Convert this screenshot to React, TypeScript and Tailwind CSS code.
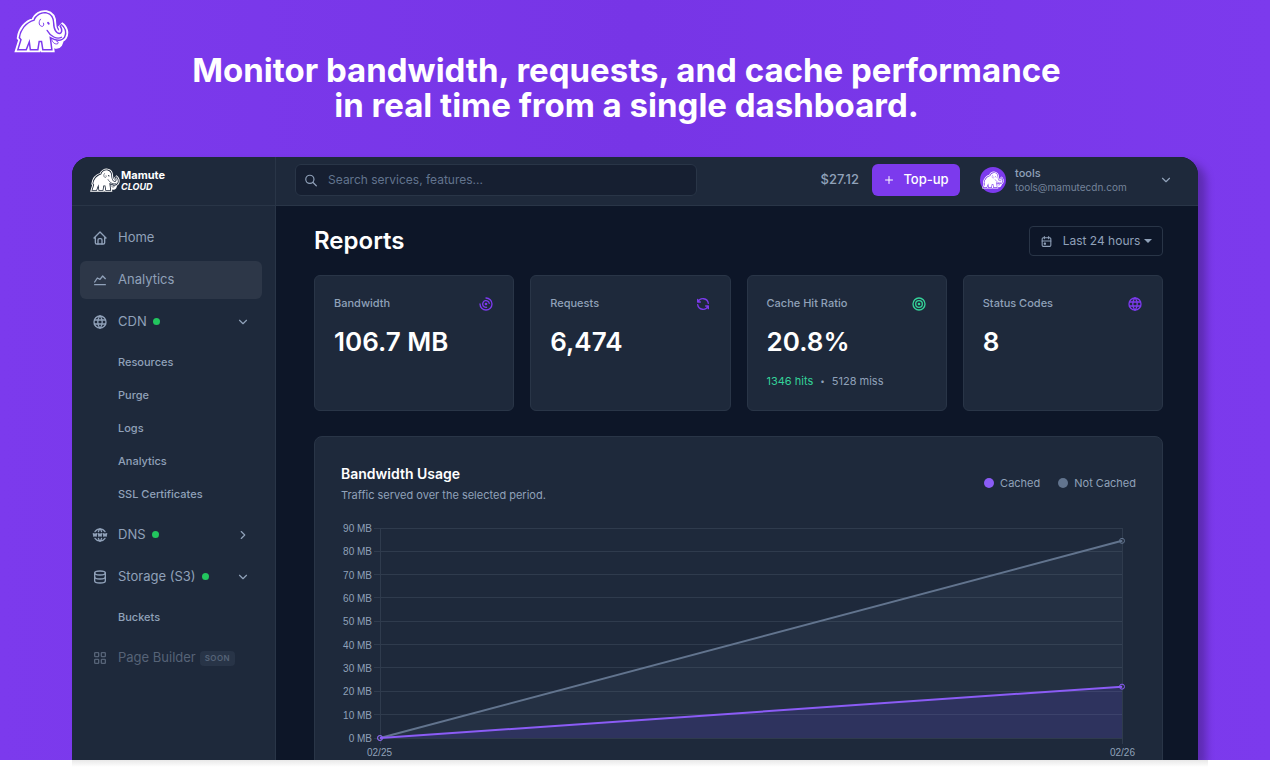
import type { ReactNode } from "react"
import type { IconType } from "react-icons"
import {
  TbCalendarEvent,
  TbChartArcs,
  TbChartLine,
  TbChevronDown,
  TbChevronRight,
  TbDatabase,
  TbHome,
  TbLayoutGrid,
  TbPlus,
  TbRefresh,
  TbSearch,
  TbTarget,
  TbWorld,
  TbWorldWww,
} from "react-icons/tb"

const BODY =
  "M20 129 L29 100 L24 94 C27 72 42 50 68 43 C73 27 88 19 103 21 C118 24 124 36 124 52 C124 68 132 84 144 84 C154 83 156 70 147 56 C160 64 164 80 157 92 C150 102 134 102 120 94 L113 90 L118 129 H95 L91 104 L80 104 L76 129 H57 L53 98 L41 129 Z"

// Mammoth mark, "line" is the class that colours the inner contour
function Mammoth({ className, line }: { className: string; line: string }) {
  return (
    <svg viewBox="6 4 166 140" className={className} aria-hidden="true">
      <path d="M122 88 C130 104 142 104 150 96 C152 112 144 124 132 122 C120 118 116 104 114 92 Z" fill="white" stroke="white" strokeWidth="12" strokeLinejoin="round" />
      <path d={BODY} fill="white" stroke="white" strokeWidth="20" strokeMiterlimit="2" />
      <path d={BODY} fill="none" className={line} strokeWidth="9" strokeMiterlimit="2" />
      <path d={BODY} fill="white" />
      <g fill="none" className={line} strokeWidth="3" strokeLinecap="round">
        <path d="M86 38 C78 48 82 60 92 60 C96 58 97 54 95 50" />
        <path d="M106 72 C116 90 136 101 150 93" strokeWidth="4" />
        <path d="M120 100 C123 110 130 115 138 113 C142 107 138 106 134 104" />
        <path d="M109 49 L111 52" strokeWidth="6" />
      </g>
    </svg>
  )
}

function Dot() {
  return <span className="mb-px h-[7px] w-[7px] rounded-full bg-[#22c55e]" />
}

function NavItem({
  icon: Icon,
  label,
  active,
  live,
  chevron,
}: {
  icon: IconType
  label: string
  active?: boolean
  live?: boolean
  chevron?: ReactNode
}) {
  return (
    <a
      href="#"
      className={`flex h-[38px] items-center rounded-md pr-3 pl-3 text-[13px] text-slate-400 ${active ? "bg-[#2d3748]" : ""}`}
    >
      <Icon size={16} className="mr-2.5" />
      <span className="mr-1.5">{label}</span>
      {live && <Dot />}
      {chevron && <span className="ml-auto">{chevron}</span>}
    </a>
  )
}

function SubNav({ items }: { items: string[] }) {
  return (
    <div className="py-px">
      {items.map((item) => (
        <a key={item} href="#" className="flex h-[33px] items-center pl-[38px] text-[11px] font-medium text-slate-400">
          {item}
        </a>
      ))}
    </div>
  )
}

function Sidebar() {
  return (
    <aside className="w-51 shrink-0 border-r border-[#293547] bg-[#1e293b]">
      <div className="flex h-[49px] items-center gap-px border-b border-[#293547] pb-0.5 pl-[18px]">
        <Mammoth className="h-[26px] w-[30px]" line="stroke-[#1e293b]" />
        <div className="font-bold text-white">
          <div className="text-[11px] leading-[12px]">Mamute</div>
          <div className="text-[9px] leading-[11px] italic">CLOUD</div>
        </div>
      </div>
      <nav className="flex flex-col gap-1 pt-[13px] pr-[13px] pl-2">
        <NavItem icon={TbHome} label="Home" />
        <NavItem icon={TbChartLine} label="Analytics" active />
        <NavItem icon={TbWorld} label="CDN" live chevron={<TbChevronDown size={14} />} />
        <SubNav items={["Resources", "Purge", "Logs", "Analytics", "SSL Certificates"]} />
        <NavItem icon={TbWorldWww} label="DNS" live chevron={<TbChevronRight size={14} />} />
        <NavItem icon={TbDatabase} label="Storage (S3)" live chevron={<TbChevronDown size={14} />} />
        <SubNav items={["Buckets"]} />
        <div className="flex h-[38px] items-center pl-3 text-[13px] text-[#566377]">
          <TbLayoutGrid size={16} className="mr-2.5" />
          <span className="mr-1">Page Builder</span>
          <span className="rounded-sm bg-[#283447] px-[5px] text-[8px] leading-[15px] font-semibold tracking-wider">SOON</span>
        </div>
      </nav>
    </aside>
  )
}

function TopBar() {
  return (
    <header className="flex h-[49px] items-center border-b border-[#293547] bg-[#1e293b] pr-[25px] pb-0.5 pl-[19px]">
      <label className="flex h-8 w-[402px] items-center rounded-md border border-[#293547] bg-[#161f31] px-2 text-slate-400">
        <TbSearch size={15} aria-label="Search" />
        <input
          type="search"
          placeholder="Search services, features..."
          className="ml-2.5 w-full bg-transparent text-[12px] outline-none placeholder:text-slate-500"
        />
      </label>
      <span className="ml-auto text-[13px] font-medium text-slate-400">$27.12</span>
      <button className="ml-[13px] flex h-8 w-[88px] items-center justify-center gap-2 rounded-md bg-[#7c3aed] text-[13px] font-medium text-white">
        <TbPlus size={12} />
        Top-up
      </button>
      <button className="ml-5 flex w-[193px] items-center text-left text-slate-400">
        <span className="flex h-[26px] w-[26px] items-center justify-center rounded-full bg-[#7c3aed]">
          <Mammoth className="h-5 w-[22px]" line="stroke-[#7c3aed]" />
        </span>
        <span className="ml-[9px]">
          <span className="block text-[11px] leading-[14px] font-medium">tools</span>
          <span className="block text-[10px] leading-[14px] text-[#74839a]">tools@mamutecdn.com</span>
        </span>
        <TbChevronDown size={14} className="ml-auto" />
      </button>
    </header>
  )
}

const stats = [
  { label: "Bandwidth", value: "106.7 MB", icon: TbChartArcs, color: "text-[#7c3aed]" },
  { label: "Requests", value: "6,474", icon: TbRefresh, color: "text-[#7c3aed]" },
  { label: "Cache Hit Ratio", value: "20.8%", icon: TbTarget, color: "text-[#34d399]", hits: "1346 hits", miss: "5128 miss" },
  { label: "Status Codes", value: "8", icon: TbWorld, color: "text-[#7c3aed]" },
]

function StatCards() {
  return (
    <div className="mt-[19px] grid grid-cols-4 gap-4">
      {stats.map(({ label, value, icon: Icon, color, hits, miss }) => (
        <div key={label} className="min-h-[136px] rounded-md border border-[#293547] bg-[#1e293b] p-[19px]">
          <div className="flex h-[17px] items-center justify-between text-[11px] font-medium text-slate-400">
            {label}
            <Icon size={16} className={color} />
          </div>
          <div className="mt-3.5 text-[26px] leading-8 font-semibold text-white">{value}</div>
          {hits && (
            <div className="mt-[15px] flex gap-[7px] text-[11px] leading-4 text-slate-400">
              <span className="text-[#34d399]">{hits}</span>
              <span className="text-[8px]">•</span>
              <span>{miss}</span>
            </div>
          )}
        </div>
      ))}
    </div>
  )
}

const MAX = 90
const ticks = [90, 80, 70, 60, 50, 40, 30, 20, 10, 0]
const notCached = [0, 84.5]
const cached = [0, 22]
const pct = (v: number) => `${100 - (v / MAX) * 100}%`

function Series({ values, stroke, fill }: { values: number[]; stroke: string; fill: string }) {
  const [a, b] = values.map((v) => MAX - v)
  return (
    <>
      <svg viewBox={`0 0 1 ${MAX}`} preserveAspectRatio="none" width="100%" height="100%">
        <polygon points={`0,${a} 1,${b} 1,${MAX} 0,${MAX}`} className={fill} />
      </svg>
      <line x1="0" y1={pct(values[0])} x2="100%" y2={pct(values[1])} className={stroke} strokeWidth="2" />
      <circle cx="0" cy={pct(values[0])} r="2.5" fill="none" className={stroke} />
      <circle cx="100%" cy={pct(values[1])} r="2.5" fill="none" className={stroke} />
    </>
  )
}

function UsageChart() {
  return (
    <section className="mt-[25px] rounded-lg border border-[#293547] bg-[#1e293b] p-[26px]">
      <div className="flex items-center justify-between">
        <div>
          <h2 className="text-[14px] leading-[22px] font-semibold text-white">Bandwidth Usage</h2>
          <p className="mt-0.5 text-[11px] leading-4 text-slate-400">Traffic served over the selected period.</p>
        </div>
        <div className="flex gap-[18px] text-[11px] text-slate-400">
          <span className="flex items-center gap-1.5">
            <span className="h-2.5 w-2.5 rounded-full bg-[#8b5cf6]" />
            Cached
          </span>
          <span className="flex items-center gap-1.5">
            <span className="h-2.5 w-2.5 rounded-full bg-slate-500" />
            Not Cached
          </span>
        </div>
      </div>
      <div className="mt-[25px] flex pr-[14px] font-['Liberation_Sans',sans-serif] text-[10px] leading-[14px] text-slate-400">
        <div className="-my-1.5 flex h-56 w-[31px] flex-col justify-between text-right whitespace-nowrap">
          {ticks.map((t) => (
            <span key={t}>{t} MB</span>
          ))}
        </div>
        <div className="ml-2 min-w-0 flex-1">
          <svg className="block h-[210px] w-full overflow-visible">
            <g className="stroke-[#2f3b4d]" shapeRendering="crispEdges">
              {ticks.map((t) => (
                <line key={t} x1="-6" y1={pct(t)} x2="100%" y2={pct(t)} />
              ))}
              <line x1="0" y1="0" x2="0" y2="216" />
              <line x1="100%" y1="0" x2="100%" y2="216" />
            </g>
            <Series values={notCached} stroke="stroke-slate-500" fill="fill-slate-500/10" />
            <Series values={cached} stroke="stroke-[#8b5cf6]" fill="fill-[#6d4cf6]/15" />
          </svg>
          <div className="-mx-[13px] mt-2 flex justify-between">
            <span>02/25</span>
            <span>02/26</span>
          </div>
        </div>
      </div>
    </section>
  )
}

export default function App() {
  return (
    <div className="flex h-screen flex-col bg-white font-[Inter,sans-serif]">
      <div className="flex min-h-0 flex-1 flex-col overflow-hidden bg-[#7c3aed] bg-linear-to-r from-[#7c3aed] via-[#7735e6] to-[#7c3aed]">
        <div className="flex h-[157px] shrink-0 items-start pt-2 pr-[86px] pl-3.5">
          <Mammoth className="h-[46px] w-[55px]" line="stroke-[#7c3aed]" />
          <h1 className="flex-1 pt-[45px] text-center text-[33px] leading-[35px] font-bold text-white">
            Monitor bandwidth, requests, and cache performance
            <br />
            in real time from a single dashboard.
          </h1>
        </div>
        <div className="mx-18 flex min-h-0 flex-1 rounded-t-[18px] shadow-[8px_6px_8px_rgba(0,0,0,0.25)]">
          <div className="flex w-full overflow-hidden rounded-t-[18px] bg-[#0d1628]">
            <Sidebar />
            <div className="min-w-0 flex-1">
              <TopBar />
              <main className="pt-5 pr-[35px] pl-[38px]">
                <div className="flex items-center justify-between">
                  <h1 className="text-[24px] leading-[30px] font-semibold text-white">Reports</h1>
                  <button className="flex h-[30px] w-[134px] items-center justify-center rounded-sm border border-[#293547] text-[12px] text-slate-400">
                    <TbCalendarEvent size={13} className="mr-2.5" />
                    Last 24 hours
                    <span className="ml-1 border-x-4 border-t-4 border-x-transparent border-t-slate-400" />
                  </button>
                </div>
                <StatCards />
                <UsageChart />
              </main>
            </div>
          </div>
        </div>
      </div>
      <div className="mr-[62px] ml-18 h-[7px] shrink-0 bg-linear-to-b from-[#e8e8e8] to-white" />
    </div>
  )
}
